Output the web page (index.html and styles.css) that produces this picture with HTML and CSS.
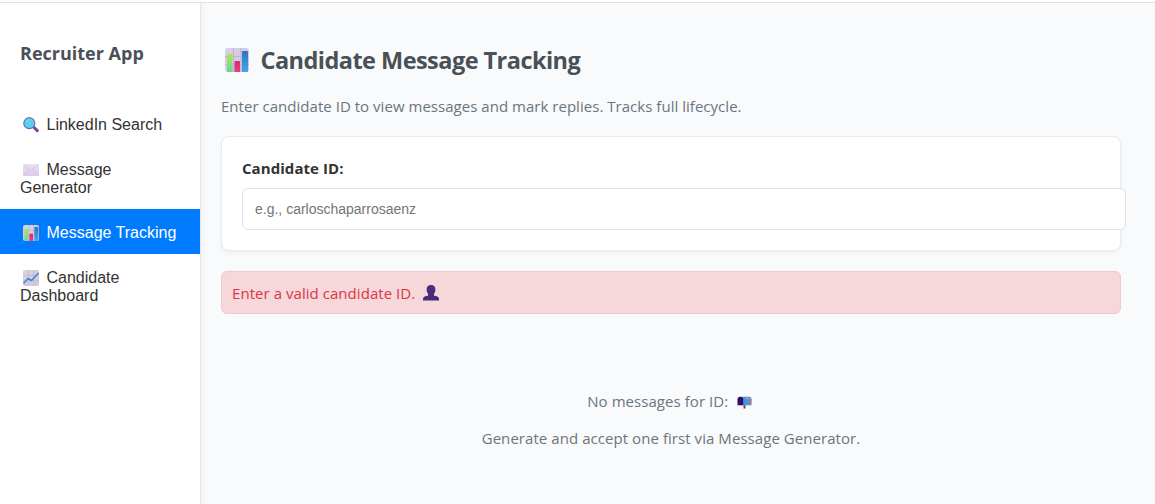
FILE: index.html
```html
<!DOCTYPE html>
<html lang="en">
<head>
<meta charset="utf-8">
<title>Recruiter App</title>
<link rel="stylesheet" href="styles.css">
</head>
<body>
<svg class="defs" width="0" height="0" aria-hidden="true">
  <defs>
    <linearGradient id="paper" x1="0" y1="0" x2="1" y2="1"><stop offset="0" stop-color="#d9d3e2"/><stop offset="1" stop-color="#d2c4dc"/></linearGradient>
    <linearGradient id="green" x1="0" y1="0" x2="0" y2="1"><stop offset="0" stop-color="#b2e45c"/><stop offset="1" stop-color="#5fdc9a"/></linearGradient>
    <linearGradient id="pink" x1="0" y1="0" x2="0" y2="1"><stop offset="0" stop-color="#d52c72"/><stop offset="1" stop-color="#f53a7e"/></linearGradient>
    <linearGradient id="blue" x1="0" y1="0" x2="0" y2="1"><stop offset="0" stop-color="#2877c4"/><stop offset="1" stop-color="#48a4ee"/></linearGradient>
    <linearGradient id="mail" x1="0" y1="0" x2="0" y2="1"><stop offset="0" stop-color="#e9e2f1"/><stop offset="1" stop-color="#dccbe9"/></linearGradient>
    <linearGradient id="person" x1="0" y1="0" x2="1" y2="1"><stop offset="0" stop-color="#4b3183"/><stop offset="1" stop-color="#49267a"/></linearGradient>
  </defs>
  <symbol id="bars" viewBox="0 0 24 24">
    <rect width="24" height="24" rx="3" fill="url(#paper)"/>
    <path d="M0 8.500H24M0 16.500H24M8.500 0V24M16 0V24" stroke="#bcb3c8" stroke-width="1"/>
    <path d="M2 24V7Q2 6 3 6H6.500Q7.500 6 7.500 7V24Z" fill="url(#green)"/>
    <path d="M9.500 24V14Q9.500 13 10.500 13H14Q15 13 15 14V24Z" fill="url(#pink)"/>
    <path d="M17 24V4Q17 3 18 3H22Q23 3 23 4V24Z" fill="url(#blue)"/>
  </symbol>
</svg>
<div class="app">
  <aside class="sidebar">
    <h3 class="brand">Recruiter App</h3>
    <nav class="nav">
      <a class="item"><svg class="icon" viewBox="0 0 16 16"><path d="M10.500 10L14.300 13.600" stroke="#7c4a87" stroke-width="3" stroke-linecap="round"/><circle cx="6.300" cy="6.200" r="5.500" fill="#5ccdea" stroke="#5c78b0" stroke-width="1.200"/><path d="M3.500 5Q4 3 6 2.800" fill="none" stroke="#7fdcf2" stroke-width="1"/></svg>LinkedIn Search</a>
      <a class="item"><svg class="icon" viewBox="0 0 16 16"><rect y="2" width="16" height="12" rx=".6" fill="url(#mail)"/><path d="M.5 2.500L8 8.500L15.500 2.500M.8 13.500L6 8M15.200 13.500L10 8" fill="none" stroke="#cdbddb" stroke-width=".7"/></svg>Message Generator</a>
      <a class="item active"><svg class="icon"><use href="#bars"/></svg>Message Tracking</a>
      <a class="item"><svg class="icon" viewBox="0 0 16 16"><rect width="16" height="16" rx="2" fill="url(#paper)"/><path d="M0 5.500H16M0 10.500H16M5.500 0V16M10.500 0V16" stroke="#c0b7cc" stroke-width=".7"/><path d="M.5 13.500L5 8.500L8.500 10.500L15.500 3" fill="none" stroke="#2e8ad2" stroke-width="1.500"/></svg>Candidate Dashboard</a>
    </nav>
  </aside>
  <main class="main">
    <h1 class="title"><svg class="icon-lg"><use href="#bars"/></svg>Candidate Message Tracking</h1>
    <p class="intro">Enter candidate ID to view messages and mark replies. Tracks full lifecycle.</p>
    <section class="card">
      <label class="label" for="cid">Candidate ID:</label>
      <input class="input" id="cid" type="text" placeholder="e.g., carloschaparrosaenz">
    </section>
    <div class="alert"><span>Enter a valid candidate ID.</span><svg class="icon-user" viewBox="0 0 16 16"><path d="M0 15.500V14.300Q0 11 5 10.800V8.500Q3.600 7.500 3.600 4.500Q3.600 0 8 0T12.400 4.500Q12.400 7.500 11 8.500V10.800Q16 11 16 14.300V15.500Z" fill="url(#person)"/></svg></div>
    <div class="empty">
      <p class="empty-line"><span>No messages for ID:</span><svg class="icon-box" viewBox="0 0 15 13"><path d="M6.500 8H8.500V12.500H6.500Z" fill="#74424f"/><path d="M3 .7H12Q14.500.7 14.500 3.500V9.300H3Z" fill="#4b91de"/><path d="M.5 9.300V3.500Q.5.700 3.300.700T6.200 3.500V9.300Z" fill="#321061"/><path d="M8.500 2.500H12.500" stroke="#a8a4d9" stroke-width="1.200"/><path d="M12.500 3H14.500V6.500H12.500Z" fill="#f36b55"/></svg></p>
      <p class="empty-line"><span>Generate and accept one first via Message Generator.</span></p>
    </div>
  </main>
</div>
</body>
</html>
```
FILE: styles.css
```css
* { box-sizing: border-box; }
body {
  margin: 0;
  background: #f8f9fa;
  color: #333;
  font-family: "Open Sans", "Noto Sans", sans-serif;
  overflow: hidden;
}
.defs { position: absolute; }
.app {
  display: flex;
  height: 504px;
  border-top: 2px solid #fff;
  background: #f8fafc;
}
.sidebar {
  width: 201px;
  flex: none;
  background: #fff;
  border-top: 1px solid #dfe1e3;
  border-right: 1px solid #e3e8ec;
  box-shadow: 2px 0 5px rgba(0, 0, 0, .04);
}
.brand {
  margin: 38px 0 0 20px;
  font-size: 18px;
  line-height: 24px;
  font-weight: 700;
  color: #495057;
  white-space: nowrap;
}
.nav { padding-top: 36px; }
.item {
  display: block;
  padding: 15px 20px 12px;
  font: 16px/18px "Liberation Sans", Arial, sans-serif;
  color: #333;
}
.item.active { background: #007bff; color: #fff; }
.icon {
  width: 16px;
  height: 16px;
  margin: 0 7.500px 0 3px;
  vertical-align: -2.500px;
}
.main {
  flex: 1;
  padding: 39px 0 0 20px;
  border-top: 1px solid #dfe1e3;
}
.title {
  display: flex;
  align-items: center;
  margin: 0;
  font-size: 23.500px;
  letter-spacing: -.54px;
  line-height: 36px;
  font-weight: 700;
  color: #495057;
  white-space: nowrap;
}
.icon-lg { width: 24px; height: 24px; margin: 0 11.500px 0 4px; }
.intro {
  margin: 16px 0 18px;
  font-size: 15px;
  letter-spacing: .03px;
  line-height: 24px;
  color: #6c757d;
  white-space: nowrap;
}
.card {
  width: 900px;
  height: 115px;
  padding: 20px;
  background: #fff;
  border: 1px solid #e7ebef;
  border-radius: 8px;
  box-shadow: 0 2px 4px rgba(0, 0, 0, .05);
}
.label {
  display: block;
  font-size: 15px;
  letter-spacing: .06px;
  line-height: 23px;
  margin-bottom: 8px;
  font-weight: 700;
}
.input {
  display: block;
  width: 884px;
  height: 42px;
  padding: 0 12px;
  border: 1px solid #dee2e6;
  border-radius: 6px;
  background: #fff;
  font: 14px "Liberation Sans", Arial, sans-serif;
}
.input::placeholder { color: #757575; }
.alert {
  display: flex;
  align-items: center;
  width: 900px;
  height: 43px;
  margin-top: 20px;
  padding: 0 10px;
  background: #f6d7da;
  border: 1px solid #f5c6cb;
  border-radius: 6px;
  color: #dc3545;
  font-size: 15px;
  letter-spacing: .05px;
  white-space: nowrap;
}
.icon-user { width: 16px; height: 16px; margin-left: 8px; }
.empty {
  width: 900px;
  padding-top: 75px;
  color: #6c757d;
  font-size: 15px;
  letter-spacing: .06px;
  line-height: 24px;
}
.empty-line {
  display: flex;
  justify-content: center;
  align-items: center;
  margin: 0 0 13px;
  white-space: nowrap;
}
.icon-box { width: 15px; height: 13px; margin: 3px 3px 0 8.500px; }
```
